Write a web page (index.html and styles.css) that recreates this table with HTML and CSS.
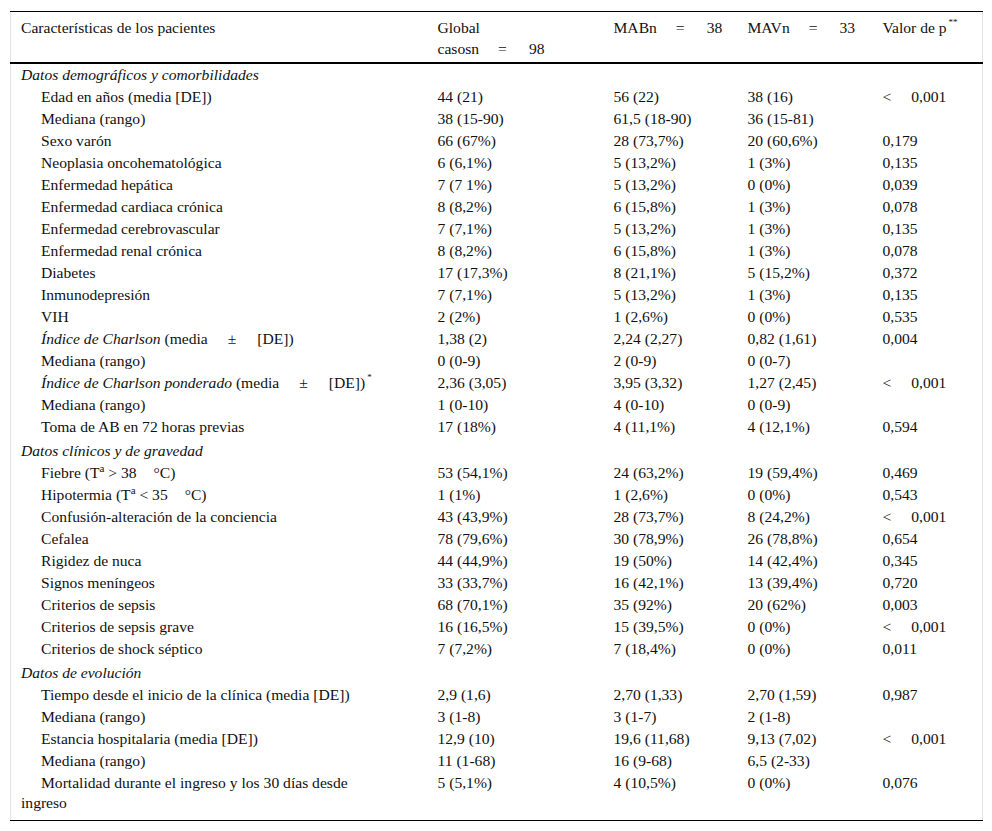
FILE: index.html
```html
<!DOCTYPE html>
<html lang="es">
<head>
<meta charset="utf-8">
<title>Características de los pacientes</title>
<link rel="stylesheet" href="styles.css">
</head>
<body>
<div class="wrap">
<table class="data">
<colgroup>
<col class="c1"><col class="c2"><col class="c3"><col class="c4"><col class="c5">
</colgroup>
<thead>
<tr>
<th>Características de los pacientes</th>
<th>Global<br>casosn<span class="eq">=</span>98</th>
<th>MABn<span class="eq">=</span>38</th>
<th>MAVn<span class="eq">=</span>33</th>
<th>Valor de p<sup class="ast">**</sup></th>
</tr>
</thead>
<tbody>
<tr class="section first"><td colspan="5">Datos demográficos y comorbilidades</td></tr>
<tr><td class="lbl">Edad en años (media [DE])</td><td>44 (21)</td><td>56 (22)</td><td>38 (16)</td><td><span class="lt">&lt;</span>0,001</td></tr>
<tr><td class="lbl">Mediana (rango)</td><td>38 (15-90)</td><td>61,5 (18-90)</td><td>36 (15-81)</td><td></td></tr>
<tr><td class="lbl">Sexo varón</td><td>66 (67%)</td><td>28 (73,7%)</td><td>20 (60,6%)</td><td>0,179</td></tr>
<tr><td class="lbl">Neoplasia oncohematológica</td><td>6 (6,1%)</td><td>5 (13,2%)</td><td>1 (3%)</td><td>0,135</td></tr>
<tr><td class="lbl">Enfermedad hepática</td><td>7 (7 1%)</td><td>5 (13,2%)</td><td>0 (0%)</td><td>0,039</td></tr>
<tr><td class="lbl">Enfermedad cardiaca crónica</td><td>8 (8,2%)</td><td>6 (15,8%)</td><td>1 (3%)</td><td>0,078</td></tr>
<tr><td class="lbl">Enfermedad cerebrovascular</td><td>7 (7,1%)</td><td>5 (13,2%)</td><td>1 (3%)</td><td>0,135</td></tr>
<tr><td class="lbl">Enfermedad renal crónica</td><td>8 (8,2%)</td><td>6 (15,8%)</td><td>1 (3%)</td><td>0,078</td></tr>
<tr><td class="lbl">Diabetes</td><td>17 (17,3%)</td><td>8 (21,1%)</td><td>5 (15,2%)</td><td>0,372</td></tr>
<tr><td class="lbl">Inmunodepresión</td><td>7 (7,1%)</td><td>5 (13,2%)</td><td>1 (3%)</td><td>0,135</td></tr>
<tr><td class="lbl">VIH</td><td>2 (2%)</td><td>1 (2,6%)</td><td>0 (0%)</td><td>0,535</td></tr>
<tr><td class="lbl"><i>Índice de Charlson</i> (media<span class="pm">±</span>[DE])</td><td>1,38 (2)</td><td>2,24 (2,27)</td><td>0,82 (1,61)</td><td>0,004</td></tr>
<tr><td class="lbl">Mediana (rango)</td><td>0 (0-9)</td><td>2 (0-9)</td><td>0 (0-7)</td><td></td></tr>
<tr><td class="lbl"><i>Índice de Charlson ponderado</i> (media<span class="pm">±</span>[DE])<sup class="ast">*</sup></td><td>2,36 (3,05)</td><td>3,95 (3,32)</td><td>1,27 (2,45)</td><td><span class="lt">&lt;</span>0,001</td></tr>
<tr><td class="lbl">Mediana (rango)</td><td>1 (0-10)</td><td>4 (0-10)</td><td>0 (0-9)</td><td></td></tr>
<tr><td class="lbl">Toma de AB en 72 horas previas</td><td>17 (18%)</td><td>4 (11,1%)</td><td>4 (12,1%)</td><td>0,594</td></tr>
<tr class="section"><td colspan="5">Datos clínicos y de gravedad</td></tr>
<tr><td class="lbl">Fiebre (T<sup class="ord">a</sup> &gt; 38<span class="deg">°C</span>)</td><td>53 (54,1%)</td><td>24 (63,2%)</td><td>19 (59,4%)</td><td>0,469</td></tr>
<tr><td class="lbl">Hipotermia (T<sup class="ord">a</sup> &lt; 35<span class="deg">°C</span>)</td><td>1 (1%)</td><td>1 (2,6%)</td><td>0 (0%)</td><td>0,543</td></tr>
<tr><td class="lbl">Confusión-alteración de la conciencia</td><td>43 (43,9%)</td><td>28 (73,7%)</td><td>8 (24,2%)</td><td><span class="lt">&lt;</span>0,001</td></tr>
<tr><td class="lbl">Cefalea</td><td>78 (79,6%)</td><td>30 (78,9%)</td><td>26 (78,8%)</td><td>0,654</td></tr>
<tr><td class="lbl">Rigidez de nuca</td><td>44 (44,9%)</td><td>19 (50%)</td><td>14 (42,4%)</td><td>0,345</td></tr>
<tr><td class="lbl">Signos meníngeos</td><td>33 (33,7%)</td><td>16 (42,1%)</td><td>13 (39,4%)</td><td>0,720</td></tr>
<tr><td class="lbl">Criterios de sepsis</td><td>68 (70,1%)</td><td>35 (92%)</td><td>20 (62%)</td><td>0,003</td></tr>
<tr><td class="lbl">Criterios de sepsis grave</td><td>16 (16,5%)</td><td>15 (39,5%)</td><td>0 (0%)</td><td><span class="lt">&lt;</span>0,001</td></tr>
<tr><td class="lbl">Criterios de shock séptico</td><td>7 (7,2%)</td><td>7 (18,4%)</td><td>0 (0%)</td><td>0,011</td></tr>
<tr class="section"><td colspan="5">Datos de evolución</td></tr>
<tr><td class="lbl">Tiempo desde el inicio de la clínica (media [DE])</td><td>2,9 (1,6)</td><td>2,70 (1,33)</td><td>2,70 (1,59)</td><td>0,987</td></tr>
<tr><td class="lbl">Mediana (rango)</td><td>3 (1-8)</td><td>3 (1-7)</td><td>2 (1-8)</td><td></td></tr>
<tr><td class="lbl">Estancia hospitalaria (media [DE])</td><td>12,9 (10)</td><td>19,6 (11,68)</td><td>9,13 (7,02)</td><td><span class="lt">&lt;</span>0,001</td></tr>
<tr><td class="lbl">Mediana (rango)</td><td>11 (1-68)</td><td>16 (9-68)</td><td>6,5 (2-33)</td><td></td></tr>
<tr class="last"><td class="lbl">Mortalidad durante el ingreso y los 30 días desde ingreso</td><td>5 (5,1%)</td><td>4 (10,5%)</td><td>0 (0%)</td><td>0,076</td></tr>
</tbody>
</table>
</div>
</body>
</html>
```
FILE: styles.css
```css
html, body {
  margin: 0;
  padding: 0;
  background: #ffffff;
}
body {
  font-family: "Liberation Serif", "Times New Roman", serif;
  font-size: 15.6px;
  color: #111111;
}
.wrap {
  padding: 11px 10px 0 10px;
}
.data {
  width: 972px;
  border-collapse: collapse;
  table-layout: fixed;
  border-left: 1px solid #e4e4e4;
  border-right: 1px solid #e4e4e4;
}
.c1 { width: 417px; }
.c2 { width: 176px; }
.c3 { width: 134px; }
.c4 { width: 135px; }
.c5 { width: 110px; }

.data th {
  font-weight: normal;
  text-align: left;
  vertical-align: top;
  line-height: 21px;
  padding: 5px 10px 3px 10px;
  border-top: 1px solid #000;
  border-bottom: 2px solid #000;
}
.data td {
  padding: 1px 10px;
  line-height: 20px;
  vertical-align: top;
  text-align: left;
}
.data td.lbl {
  text-indent: 20px;
  padding-right: 34px;
}
.section td {
  font-style: italic;
  padding-top: 3px;
}
.section.first td {
  padding-top: 1px;
}
.last td {
  padding-bottom: 7px;
  border-bottom: 1px solid #000;
}
sup {
  line-height: 0;
  text-indent: 0;
}
sup.ast {
  font-size: 9px;
  vertical-align: 8px;
  margin-left: 2px;
}
sup.ord {
  font-size: 11px;
  vertical-align: 6px;
}
.eq {
  display: inline-block;
  margin: 0 22px 0 19px;
  text-indent: 0;
}
.pm {
  display: inline-block;
  margin: 0 21px 0 20px;
  text-indent: 0;
}
.lt {
  display: inline-block;
  margin-right: 20px;
}
.deg {
  display: inline-block;
  margin-left: 17px;
  text-indent: 0;
}
```
